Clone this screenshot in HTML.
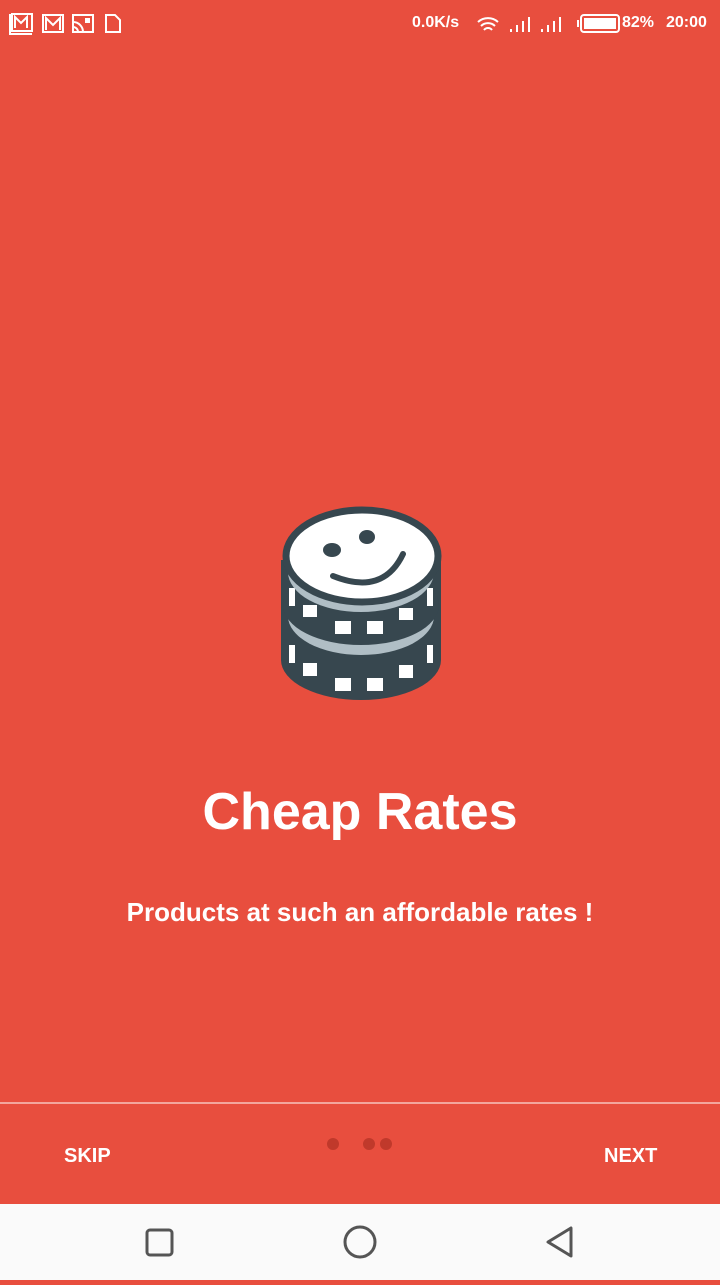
<!DOCTYPE html>
<html><head><style>
body{margin:0;width:720px;height:1280px;background:#E84E3E;position:relative;overflow:hidden;font-family:"Liberation Sans",sans-serif;color:#fff}
.sb{position:absolute;top:0;left:0;width:720px;height:48px;font-size:16px}
.t{position:absolute;white-space:nowrap;font-weight:bold}
.nav{position:absolute;top:1204px;left:0;width:720px;height:76px;background:#fafafa}
</style></head><body>
<div class="sb">
<svg width="720" height="48" style="position:absolute;left:0;top:0" fill="none" stroke="#fff" stroke-width="2">
<rect x="12" y="14" width="20" height="17"/><path d="M10 14v20h22"/><path d="M15 28V17l6 6 6-6v11"/>
<rect x="43" y="15" width="20" height="17"/><path d="M46 30V18l7 7 7-7v12"/>
<rect x="73" y="15" width="20" height="17"/><path d="M73 22a10 10 0 0 1 10 10M73 27a5 5 0 0 1 5 5"/><rect x="86" y="19" width="3" height="3" fill="#fff"/>
<path d="M106 15h9l5 5v12h-14z"/>
<path d="M478 22a15 15 0 0 1 20 0M481 26a10 10 0 0 1 14 0M484 30a5 5 0 0 1 8 0"/>
<path d="M511 32v-3M517 32v-7M523 32v-11M529 32v-15M542 32v-3M548 32v-7M554 32v-11M560 32v-15"/>
<rect x="581" y="15" width="38" height="17" rx="3"/><rect x="584" y="18" width="32" height="11" fill="#fff" stroke="none"/><path d="M578 20v7"/>
</svg>
<div class="t" style="left:412px;top:14px;font-size:16px">0.0K/s</div>
<div class="t" style="left:622px;top:14px;font-size:16px">82%</div>
<div class="t" style="left:666px;top:14px;font-size:16px">20:00</div>
</div>
<svg width="720" height="1280" style="position:absolute;left:0;top:0">
<path d="M281 560v100a80 40 0 0 0 160 0v-100z" fill="#37474F"/>
<g fill="#fff">
<rect x="303" y="663" width="14" height="13"/><rect x="335" y="678" width="16" height="13"/><rect x="367" y="678" width="16" height="13"/><rect x="399" y="665" width="14" height="13"/>
<rect x="289" y="645" width="6" height="18"/><rect x="427" y="645" width="6" height="18"/>
</g>
<ellipse cx="361" cy="616" rx="73" ry="39" fill="#B0BEC5"/>
<ellipse cx="361" cy="605" rx="78" ry="40" fill="#37474F"/>
<g fill="#fff">
<rect x="303" y="605" width="14" height="12"/><rect x="335" y="621" width="16" height="13"/><rect x="367" y="621" width="16" height="13"/><rect x="399" y="608" width="14" height="12"/>
<rect x="289" y="588" width="6" height="18"/><rect x="427" y="588" width="6" height="18"/>
</g>
<ellipse cx="361" cy="572" rx="73" ry="40" fill="#B0BEC5"/>
<ellipse cx="362" cy="556" rx="76" ry="46" fill="#fff" stroke="#37474F" stroke-width="7"/>
<ellipse cx="332" cy="550" rx="9" ry="7" fill="#37474F"/>
<ellipse cx="367" cy="537" rx="8" ry="7" fill="#37474F"/>
<path d="M333 576q50 20 70-22" fill="none" stroke="#37474F" stroke-width="6" stroke-linecap="round"/>
<line x1="0" y1="1103" x2="720" y2="1103" stroke="#f3a69d" stroke-width="2"/>
<circle cx="333" cy="1144" r="6" fill="#C0392B"/><circle cx="369" cy="1144" r="6" fill="#C0392B"/><circle cx="386" cy="1144" r="6" fill="#C0392B"/>
</svg>
<div class="t" style="left:0;width:720px;text-align:center;top:782px;font-size:52px">Cheap Rates</div>
<div class="t" style="left:0;width:720px;text-align:center;top:897px;font-size:26px">Products at such an affordable rates !</div>
<div class="t" style="left:64px;top:1145px;font-size:20px">SKIP</div>
<div class="t" style="left:604px;top:1145px;font-size:20px">NEXT</div>
<div class="nav">
<svg width="720" height="76" fill="none" stroke="#555" stroke-width="3">
<rect x="147" y="26" width="25" height="25" rx="3"/>
<circle cx="360" cy="38" r="15"/>
<path d="M571 24v28l-23-14z" stroke-linejoin="round"/>
</svg>
</div>
</body></html>
